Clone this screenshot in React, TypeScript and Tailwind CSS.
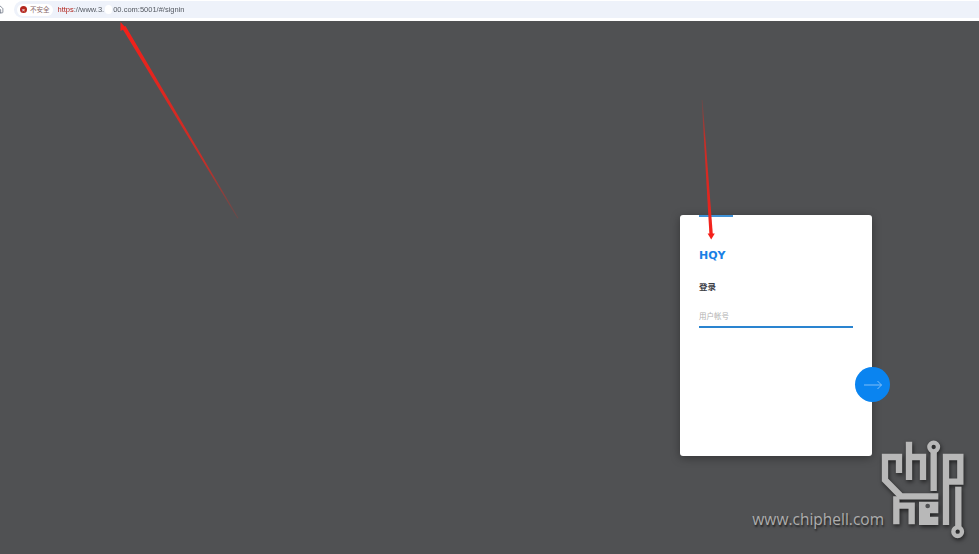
import React from "react";
import { Home } from "lucide-react";

const CJK = "font-['Liberation_Sans','Noto_Sans_CJK_SC',sans-serif]";

// annotation arrows drawn on top of the screenshot
function RedArrows() {
  return (
    <svg className="pointer-events-none absolute inset-0 z-10" width="979" height="554" viewBox="0 0 979 554">
      <defs>
        <linearGradient id="a1" gradientUnits="userSpaceOnUse" x1="238" y1="218" x2="124" y2="28">
          <stop offset="0" stopColor="#b8322c" stopOpacity="0.25" />
          <stop offset="0.3" stopColor="#d42a22" stopOpacity="0.9" />
          <stop offset="1" stopColor="#f5201a" />
        </linearGradient>
        <linearGradient id="a2" gradientUnits="userSpaceOnUse" x1="702" y1="100" x2="711" y2="234">
          <stop offset="0" stopColor="#b8322c" stopOpacity="0.25" />
          <stop offset="0.3" stopColor="#d42a22" stopOpacity="0.9" />
          <stop offset="1" stopColor="#f5201a" />
        </linearGradient>
      </defs>
      <polygon points="238.4,218 125.5,26 122,28 237.6,218.4" fill="url(#a1)" />
      <polygon points="120.5,22 126,28 120.5,31" fill="#f5201a" />
      <polygon points="702.5,100 712.8,234 709.4,234 701.7,100" fill="url(#a2)" />
      <polygon points="711.2,239.5 707.6,233.5 714.8,233.5" fill="#f5201a" />
    </svg>
  );
}

function ChipHellLogo() {
  return (
    <svg width="100" height="110" viewBox="0 0 300 330" fill="none" stroke="#b8b8b8" strokeWidth="19" className="drop-shadow-[1px_2px_2px_rgba(0,0,0,0.6)]">
      {/* c, running down into the h below */}
      <path d="M72 114 V66 H30 V135 L78 184 H190" />
      {/* h */}
      <path d="M102 20 V135 M102 66 H144 V135" />
      {/* i */}
      <path d="M176 50 V168" />
      <circle cx="176" cy="36" r="13" strokeWidth="13" />
      {/* p */}
      <path d="M213 270 V66 H256 V140 H213" />
      {/* h */}
      <path d="M64 184 V268 M64 212 H110 V268" />
      {/* e */}
      <path d="M132 200 H190 V235 H165 V245 H190 V270 H132 Z" fill="#b8b8b8" stroke="none" />
      <circle cx="158" cy="213" r="7" fill="#505153" stroke="none" />
      {/* l */}
      <path d="M250 155 V278" />
      <circle cx="248" cy="290" r="13" strokeWidth="13" />
    </svg>
  );
}

export default function App() {
  return (
    <div className="relative flex h-screen w-full flex-col overflow-hidden bg-[#505153]">
      {/* Browser toolbar */}
      <div className="flex h-[19px] items-center bg-white">
        <Home size={9} className="ml-[-5px] mr-[10px] text-gray-500" />
        <div className="flex h-[17px] flex-1 items-center rounded-l-full bg-[#eef2fa] pl-[3px]">
          <div className={`flex h-[12px] items-center gap-[2px] rounded-full bg-white px-[3px] text-[6.5px] text-[#8a6a6a] ${CJK}`}>
            <span className="flex h-[7px] w-[7px] items-center justify-center rounded-full bg-[#b3261e] text-[6px] leading-none text-white">×</span>
            <span className="ml-[1px]">不安全</span>
          </div>
          <div className="ml-[5px] flex items-center font-['Liberation_Sans',sans-serif] text-[7.5px] text-[#555a62] blur-[0.25px]">
            <span className="text-[#b3261e]">https</span>
            <span>://www.3.</span>
            <span className="mx-[1px] h-[9px] w-[7px] rounded-full bg-white" />
            <span>00.com:5001/#/signin</span>
          </div>
        </div>
      </div>
      <div className="h-[2px] bg-white" />

      {/* Page */}
      <div className="flex flex-1 items-start justify-end pr-[107px] pt-[194px]">
        <div className="relative h-[241px] w-[192px] rounded-[3px] bg-white px-[19px] shadow-[0_2px_10px_rgba(0,0,0,0.35)]">
          <div className="h-[2px] w-[34px] bg-[#3f92d8]" />
          <h1 className="mt-[32px] font-['DejaVu_Sans',sans-serif] text-[11px] leading-[14px] font-bold text-[#1a80e5]">HQY</h1>
          <h2 className={`mt-[18px] text-[8.5px] leading-[12px] font-bold text-[#3c4046] ${CJK}`}>登录</h2>
          <div className={`mt-[19px] border-b-2 border-[#2a84d0] pb-[4px] text-[7.5px] leading-[10px] text-[#b0b0b0] ${CJK}`}>用户帐号</div>
          <button className="absolute top-[152px] right-[-18px] flex h-[35px] w-[35px] items-center justify-center rounded-full bg-[#0a84f0]">
            <svg width="20" height="10" viewBox="0 0 20 10" fill="none" stroke="#8cc4f7" strokeWidth="0.9">
              <path d="M1 5 H18.5 M14.5 1 L18.5 5 L14.5 9" />
            </svg>
          </button>
        </div>
      </div>

      <RedArrows />

      {/* Forum watermark */}
      <div className="absolute right-[4px] bottom-[9px] z-10 flex items-start">
        <span className="mt-[74px] mr-[-9px] font-['Open_Sans',sans-serif] text-[15.5px] leading-[20px] text-[#adadad] [text-shadow:1px_2px_2px_rgba(0,0,0,0.6)]">www.chiphell.com</span>
        <ChipHellLogo />
      </div>
    </div>
  );
}
